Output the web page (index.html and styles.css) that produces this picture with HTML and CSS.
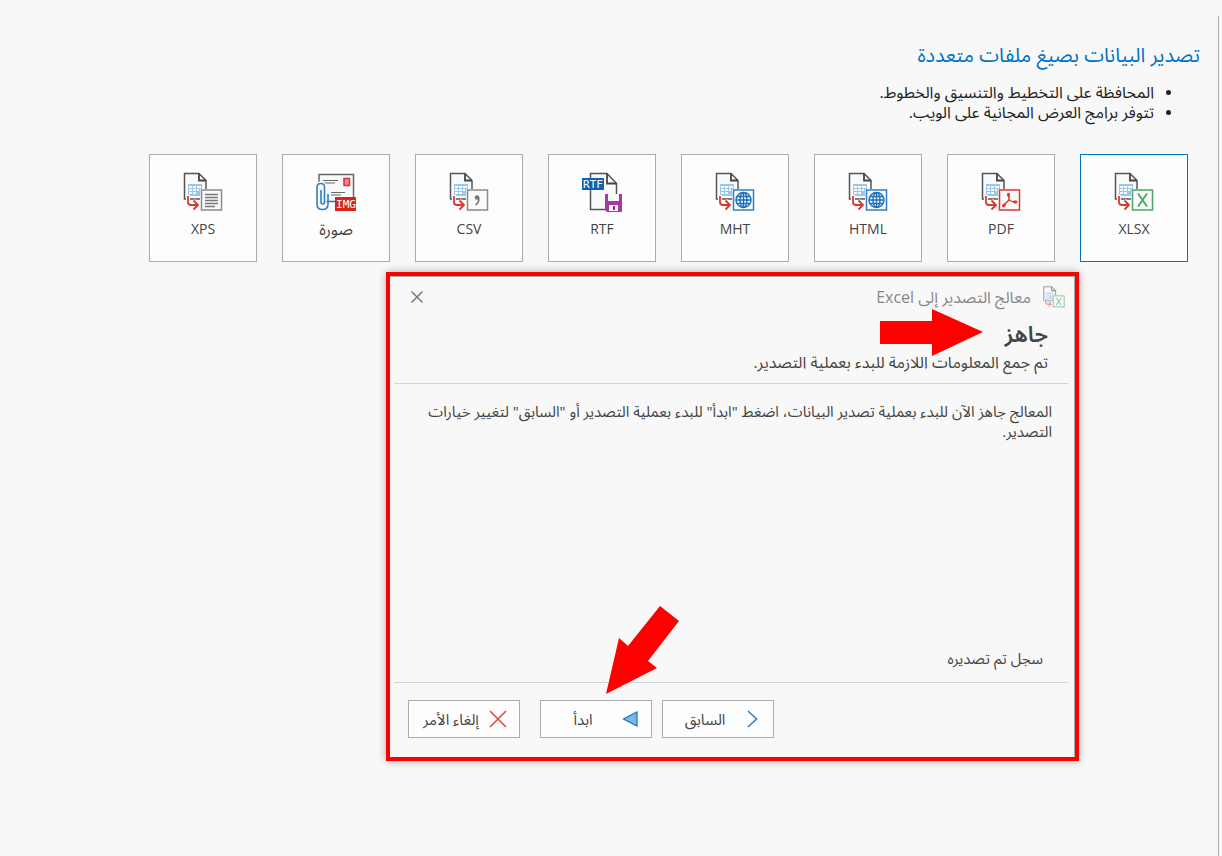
FILE: index.html
```html
<!DOCTYPE html>
<html lang="ar" dir="rtl">

<head>
    <meta charset="UTF-8">
    <meta name="viewport" content="width=device-width, initial-scale=1.0">
    <title>تصدير البيانات</title>
    <link rel="stylesheet" href="styles.css">
</head>

<body>
    <!-- shared icon parts -->
    <svg class="sprite" aria-hidden="true">
        <symbol id="sheet" viewBox="0 0 40 40">
            <path d="M17 27H1.5V1.5H16L23 8.5V17" fill="#fafafa" stroke="#555" stroke-width="1.5"/>
            <path d="M16 1.5V8.5H23" fill="none" stroke="#444" stroke-width="1.8"/>
            <path d="M5 12H19V17H17V24H5Z" fill="#9cc7e8"/>
            <path d="M6 14h3v2H6zM10 14h3v2h-3zM14 14h4v2h-4zM6 17h3v2H6zM10 17h3v2h-3zM14 17h2v2h-2zM6 20h3v2H6zM10 20h3v2h-3z" fill="#fafafa"/>
            <path d="M5 23V30Q5 33 8 33H14M10.5 28.5L15 33L10.5 37.5" fill="none" stroke="#fafafa" stroke-width="4"/>
            <path d="M5 24V30Q5 33 8 33H14M10.5 28.5L15 33L10.5 37.5" fill="none" stroke="#d9392e" stroke-width="1.8"/>
        </symbol>
        <symbol id="xlsx" viewBox="0 0 40 40">
            <use href="#sheet"/>
            <rect x="18.5" y="18" width="20" height="20" fill="#fafafa" stroke="#4ba564" stroke-width="1.5"/>
            <path d="M24 21.5L33 34.5M33 21.5L24 34.5" stroke="#4ba564" stroke-width="1.8"/>
        </symbol>
        <symbol id="globe" viewBox="0 0 40 40">
            <use href="#sheet"/>
            <rect x="18.5" y="18" width="20" height="20" fill="#fafafa" stroke="#2f80c5" stroke-width="1.5"/>
            <g fill="none" stroke="#1d70b8" stroke-width="1.4">
                <circle cx="28.5" cy="28" r="7.5"/>
                <ellipse cx="28.5" cy="28" rx="3.5" ry="7.5"/>
                <path d="M28.5 20.5V35.5M21 28H36M22 24.5H35M22 31.5H35"/>
            </g>
        </symbol>
    </svg>

    <main class="page">
        <h1 class="title">تصدير البيانات بصيغ ملفات متعددة</h1>
        <ul class="notes">
            <li>المحافظة على التخطيط والتنسيق والخطوط.</li>
            <li>تتوفر برامج العرض المجانية على الويب.</li>
        </ul>

        <div class="formats">
            <button class="format selected">
                <svg class="icon" viewBox="0 0 40 40"><use href="#xlsx"/></svg>
                XLSX
            </button>
            <button class="format">
                <svg class="icon" viewBox="0 0 40 40">
                    <use href="#sheet"/>
                    <rect x="18.5" y="18" width="20" height="20" fill="#fafafa" stroke="#d9392e" stroke-width="1.5"/>
                    <path d="M27.5 22.5Q28 25.5 28 28L22.5 33.5M28 28Q31 30 35 30" fill="none" stroke="#d9392e" stroke-width="1.5" stroke-linecap="round"/>
                    <path d="M27.5 22.2V23.5M22.3 33.8L23.5 32.8M33.5 30H35" fill="none" stroke="#d9392e" stroke-width="2.8" stroke-linecap="round"/>
                </svg>
                PDF
            </button>
            <button class="format">
                <svg class="icon" viewBox="0 0 40 40"><use href="#globe"/></svg>
                HTML
            </button>
            <button class="format">
                <svg class="icon" viewBox="0 0 40 40"><use href="#globe"/></svg>
                MHT
            </button>
            <button class="format">
                <svg class="icon" viewBox="0 0 40 40">
                    <path d="M8.5 1.5H25L34.5 11.5V37.5H8.5Z" fill="#fafafa" stroke="#555" stroke-width="1.5"/>
                    <path d="M25 1.5V11.5H34.5" fill="none" stroke="#444" stroke-width="1.8"/>
                    <rect x="0" y="6" width="22" height="12" fill="#0f63b0"/>
                    <text x="11" y="16" class="rtf-text" text-anchor="middle" direction="ltr">RTF</text>
                    <path d="M23 22H40V40H25L23 38Z" fill="#a23ba8"/>
                    <path d="M26 22H37V29H26zM27 33H36V39H27z" fill="#fafafa"/>
                    <path d="M31 34H33V38H31Z" fill="#8a2a92"/>
                </svg>
                RTF
            </button>
            <button class="format">
                <svg class="icon" viewBox="0 0 40 40">
                    <use href="#sheet"/>
                    <rect x="18.5" y="18" width="20" height="20" fill="#fafafa" stroke="#888" stroke-width="1.5"/>
                    <circle cx="28" cy="25.5" r="2.2" fill="#777"/>
                    <path d="M29.5 25Q31 30 26.5 33" fill="none" stroke="#777" stroke-width="1.6"/>
                </svg>
                CSV
            </button>
            <button class="format arabic">
                <svg class="icon" viewBox="0 0 40 40">
                    <rect x="3" y="2.5" width="34.5" height="27" fill="#fafafa" stroke="#666" stroke-width="1.5"/>
                    <path d="M7 8.5H22M7 11H19M15 20.5H29M15 23H25" stroke="#666" stroke-width="1.2"/>
                    <rect x="28" y="6.5" width="5.5" height="7" fill="#f3868a" stroke="#d9303a" stroke-width="1.5"/>
                    <path d="M1 15Q1 11.5 4.8 11.5Q8.5 11.5 8.5 15V37H1Z" fill="#fafafa" stroke="#fafafa" stroke-width="4"/>
                    <path d="M12 22V32Q12 37.5 6.5 37.5Q1 37.5 1 32V15Q1 11.5 4.8 11.5Q8.5 11.5 8.5 15V30Q8.5 32 6.8 32Q5 32 5 30V18" fill="none" stroke="#2f80c5" stroke-width="1.6"/>
                    <rect x="19" y="25" width="21" height="14" fill="#d5261d"/>
                    <text x="30" y="36" class="img-text" text-anchor="middle" direction="ltr">IMG</text>
                </svg>
                صورة
            </button>
            <button class="format">
                <svg class="icon" viewBox="0 0 40 40">
                    <use href="#sheet"/>
                    <rect x="18.5" y="18" width="20" height="20" fill="#fafafa" stroke="#8a8a8a" stroke-width="1.5"/>
                    <path d="M22 22.5H35M22 25.5H35M22 28.5H35M22 31.5H35M22 34.5H32" stroke="#777" stroke-width="1.4"/>
                </svg>
                XPS
            </button>
        </div>

        <section class="wizard">
            <div class="wizard-bar">
                <svg class="small-icon" viewBox="0 0 40 40"><use href="#xlsx"/></svg>
                <span>معالج التصدير إلى Excel</span>
                <button class="close" aria-label="إغلاق">
                    <svg width="12" height="12" viewBox="0 0 12 12"><path d="M.5.5L11.5 11.5M11.5.5L.5 11.5" stroke="#777" stroke-width="1.5"/></svg>
                </button>
            </div>
            <div class="wizard-head">
                <h2>جاهز</h2>
                <p>تم جمع المعلومات اللازمة للبدء بعملية التصدير.</p>
            </div>
            <div class="wizard-body">
                <p>المعالج جاهز الآن للبدء بعملية تصدير البيانات، اضغط "ابدأ" للبدء بعملية التصدير أو "السابق" لتغيير خيارات التصدير.</p>
                <p class="status">سجل تم تصديره</p>
            </div>
            <div class="wizard-foot">
                <button class="action">
                    <svg width="18" height="18" viewBox="0 0 18 18"><path d="M5 1L13.5 9L5 17" fill="none" stroke="#2f80c5" stroke-width="1.6"/></svg>
                    <span>السابق</span>
                </button>
                <button class="action">
                    <svg width="18" height="18" viewBox="0 0 18 18"><path d="M16 2V16L2.5 9Z" fill="#7db7e8" stroke="#1d70b8" stroke-width="1.2"/></svg>
                    <span>ابدأ</span>
                </button>
                <button class="action cancel">
                    <svg width="18" height="18" viewBox="0 0 18 18"><path d="M1 1L17 17M17 1L1 17" stroke="#dc4a40" stroke-width="1.6"/></svg>
                    <span>إلغاء الأمر</span>
                </button>
            </div>

            <!-- pointers -->
            <svg class="pointer pointer-title" width="103" height="47" viewBox="0 0 103 47"><path d="M0 12H52V0L103 23L52 47V35H0Z" fill="#f00"/></svg>
            <svg class="pointer pointer-start" width="74" height="88" viewBox="0 0 74 88"><path d="M54 0L73 15L42 55L51 62L0 88L13 32L22 40Z" fill="#f00"/></svg>
        </section>
    </main>
</body>

</html>
```
FILE: styles.css
```css
* {
    box-sizing: border-box;
}

body {
    margin: 0;
    padding: 16px 0 0 0;
    min-height: 100vh;
    display: flex;
    background-color: #f8f8f8;
    color: #222;
    font-family: "Open Sans", "Noto Sans Arabic", "DejaVu Sans", sans-serif;
    font-size: 15px;
    line-height: 20px;
}

h1,
h2,
p,
ul {
    margin: 0;
    padding: 0;
}

button {
    font: inherit;
    color: #444;
    cursor: pointer;
}

.sprite {
    position: absolute;
    width: 0;
    height: 0;
}

.page {
    flex: 1;
    margin-right: 3px;
    padding: 23px 18px 24px 24px;
    border-right: 1px solid #ababab;
}

.title {
    color: #0072c6;
    font-size: 20px;
    font-weight: 400;
    line-height: 32px;
}

.notes {
    margin-top: 11px;
    padding-right: 46px;
    font-size: 16px;
}

.notes li::marker {
    font-size: 14px;
}

.formats {
    display: flex;
    flex-wrap: wrap;
    gap: 25px;
    margin-top: 32px;
    padding-right: 12px;
}

.format {
    display: flex;
    flex-direction: column;
    align-items: center;
    gap: 7px;
    width: 108px;
    height: 108px;
    padding: 17px 0 0 0;
    border: 1px solid #ababab;
    background-color: #fdfdfd;
    font-size: 14px;
}

.format.selected {
    border-color: #0072c6;
}

.format.arabic {
    font-size: 16px;
}

.icon {
    width: 40px;
    height: 40px;
}

.rtf-text,
.img-text {
    fill: #fff;
    font-family: "DejaVu Sans Mono", monospace;
    font-size: 11px;
}

.wizard {
    position: relative;
    max-width: 693px;
    margin: 10px 121px 0 0;
    padding: 0 7px 0 4px;
    border: 4px solid #f00;
    background-color: #f8f8f8;
    color: #444;
    box-shadow: 0 0 8px rgba(0, 0, 0, 0.3), inset -1px 1px 0 #ababab;
}

.wizard-bar {
    display: flex;
    align-items: center;
    gap: 12px;
    height: 42px;
    padding: 0 3px 0 17px;
    color: #888;
    font-size: 16px;
}

.small-icon {
    width: 22px;
    height: 22px;
    opacity: 0.7;
}

.close {
    display: flex;
    margin-right: auto;
    padding: 0;
    border: 0;
    background: none;
}

.wizard-head {
    padding: 0 20px 11px 0;
    border-bottom: 1px solid #d4d4d4;
    font-size: 16px;
}

.wizard-head h2 {
    margin-bottom: 4px;
    font-size: 22px;
    font-weight: 600;
    line-height: 30px;
}

.wizard-body {
    display: flex;
    flex-direction: column;
    justify-content: space-between;
    min-height: 299px;
    padding: 17px 16px 14px 16px;
    border-bottom: 1px solid #d4d4d4;
}

.status {
    padding-right: 9px;
}

.wizard-foot {
    display: flex;
    justify-content: flex-end;
    gap: 10px;
    padding: 17px 0 19px 14px;
}

.action {
    display: flex;
    align-items: center;
    width: 112px;
    height: 38px;
    padding: 0 12px 0 4px;
    border: 1px solid #ababab;
    background-color: #fdfdfd;
}

.action span {
    flex: 1;
    text-align: center;
}

.cancel {
    margin-right: 10px;
}

.pointer {
    position: absolute;
}

.pointer-title {
    top: 33px;
    right: 92px;
}

.pointer-start {
    top: 330px;
    left: 216px;
}
```
